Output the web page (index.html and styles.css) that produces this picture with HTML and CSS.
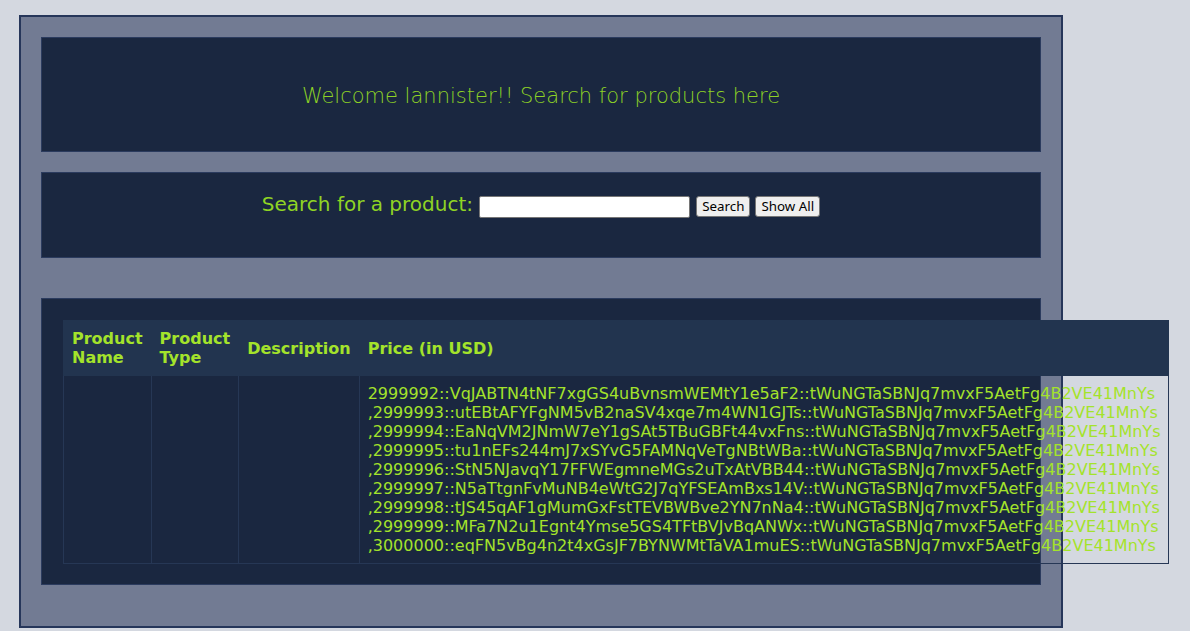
FILE: index.html
```html
<!DOCTYPE html>
<html>
<head>
<meta charset="utf-8">
<link rel="stylesheet" href="styles.css">
</head>
<body>
<div class="app">
  <div class="panel welcome">
    <p class="welcome-text">Welcome lannister!! Search for products here</p>
  </div>
  <div class="panel search">
    <label class="search-label" for="q">Search for a product:</label>
    <input id="q" class="search-input" type="text">
    <button class="btn">Search</button>
    <button class="btn">Show All</button>
  </div>
  <div class="panel results">
    <table class="products">
      <thead>
        <tr>
          <th>Product Name</th>
          <th>Product Type</th>
          <th>Description</th>
          <th>Price (in USD)</th>
        </tr>
      </thead>
      <tbody>
        <tr>
          <td></td>
          <td></td>
          <td></td>
          <td class="price">
            <div>2999992::VqJABTN4tNF7xgGS4uBvnsmWEMtY1e5aF2::tWuNGTaSBNJq7mvxF5AetFg4B2VE41MnYs</div>
            <div>,2999993::utEBtAFYFgNM5vB2naSV4xqe7m4WN1GJTs::tWuNGTaSBNJq7mvxF5AetFg4B2VE41MnYs</div>
            <div>,2999994::EaNqVM2JNmW7eY1gSAt5TBuGBFt44vxFns::tWuNGTaSBNJq7mvxF5AetFg4B2VE41MnYs</div>
            <div>,2999995::tu1nEFs244mJ7xSYvG5FAMNqVeTgNBtWBa::tWuNGTaSBNJq7mvxF5AetFg4B2VE41MnYs</div>
            <div>,2999996::StN5NJavqY17FFWEgmneMGs2uTxAtVBB44::tWuNGTaSBNJq7mvxF5AetFg4B2VE41MnYs</div>
            <div>,2999997::N5aTtgnFvMuNB4eWtG2J7qYFSEAmBxs14V::tWuNGTaSBNJq7mvxF5AetFg4B2VE41MnYs</div>
            <div>,2999998::tJS45qAF1gMumGxFstTEVBWBve2YN7nNa4::tWuNGTaSBNJq7mvxF5AetFg4B2VE41MnYs</div>
            <div>,2999999::MFa7N2u1Egnt4Ymse5GS4TFtBVJvBqANWx::tWuNGTaSBNJq7mvxF5AetFg4B2VE41MnYs</div>
            <div>,3000000::eqFN5vBg4n2t4xGsJF7BYNWMtTaVA1muES::tWuNGTaSBNJq7mvxF5AetFg4B2VE41MnYs</div>
          </td>
        </tr>
      </tbody>
    </table>
  </div>
</div>
</body>
</html>
```

FILE: styles.css
```css
html, body {
  margin: 0;
  padding: 0;
}
body {
  background: #d4d8e0;
  font-family: "DejaVu Sans", sans-serif;
  font-size: 16px;
  padding: 15px 0 0 19px;
  height: 631px;
  box-sizing: border-box;
  overflow: hidden;
}
.app {
  width: 1044px;
  height: 613px;
  box-sizing: border-box;
  background: #727b93;
  border: 2px solid #26365a;
  padding: 20px 20px 0 20px;
}
.panel {
  box-sizing: border-box;
  background: #1a2740;
  border: 1px solid #2b3b5e;
  width: 1000px;
}
.welcome {
  height: 115px;
  display: flex;
  align-items: center;
  justify-content: center;
}
.welcome-text {
  margin: 0;
  font-size: 21px;
  font-weight: 200;
  color: #8ed226;
  padding-top: 2px;
}
.search {
  margin-top: 20px;
  height: 86px;
  padding-top: 19px;
  text-align: center;
}
.search-label {
  font-size: 20px;
  color: #8fd424;
}
.search-input {
  width: 211px;
  height: 22px;
  box-sizing: border-box;
  margin: 0 0 0 1px;
  border: 1px solid #767676;
  border-radius: 2px;
  background: #fff;
  vertical-align: baseline;
}
.btn {
  font-family: "Noto Sans", "DejaVu Sans", sans-serif;
  font-size: 13.33px;
  height: 21px;
  padding: 0 5px;
  margin-left: 1px;
  background: #efefef;
  border: 1px solid #767676;
  border-radius: 3px;
  color: #000;
  line-height: 18px;
}
.btn + .btn {
  margin-left: 0;
}
.results {
  margin-top: 40px;
  height: 287px;
  padding: 21px;
}
.products {
  border-collapse: collapse;
  color: #a4e32b;
}
.products th {
  background: #22344f;
  text-align: left;
  padding: 8px;
  border: 1px solid #22344f;
  line-height: 19px;
}
.products td {
  border: 1px solid #263755;
  padding: 8px;
  vertical-align: top;
  line-height: 19px;
}
.products td.price {
  white-space: nowrap;
}
```
